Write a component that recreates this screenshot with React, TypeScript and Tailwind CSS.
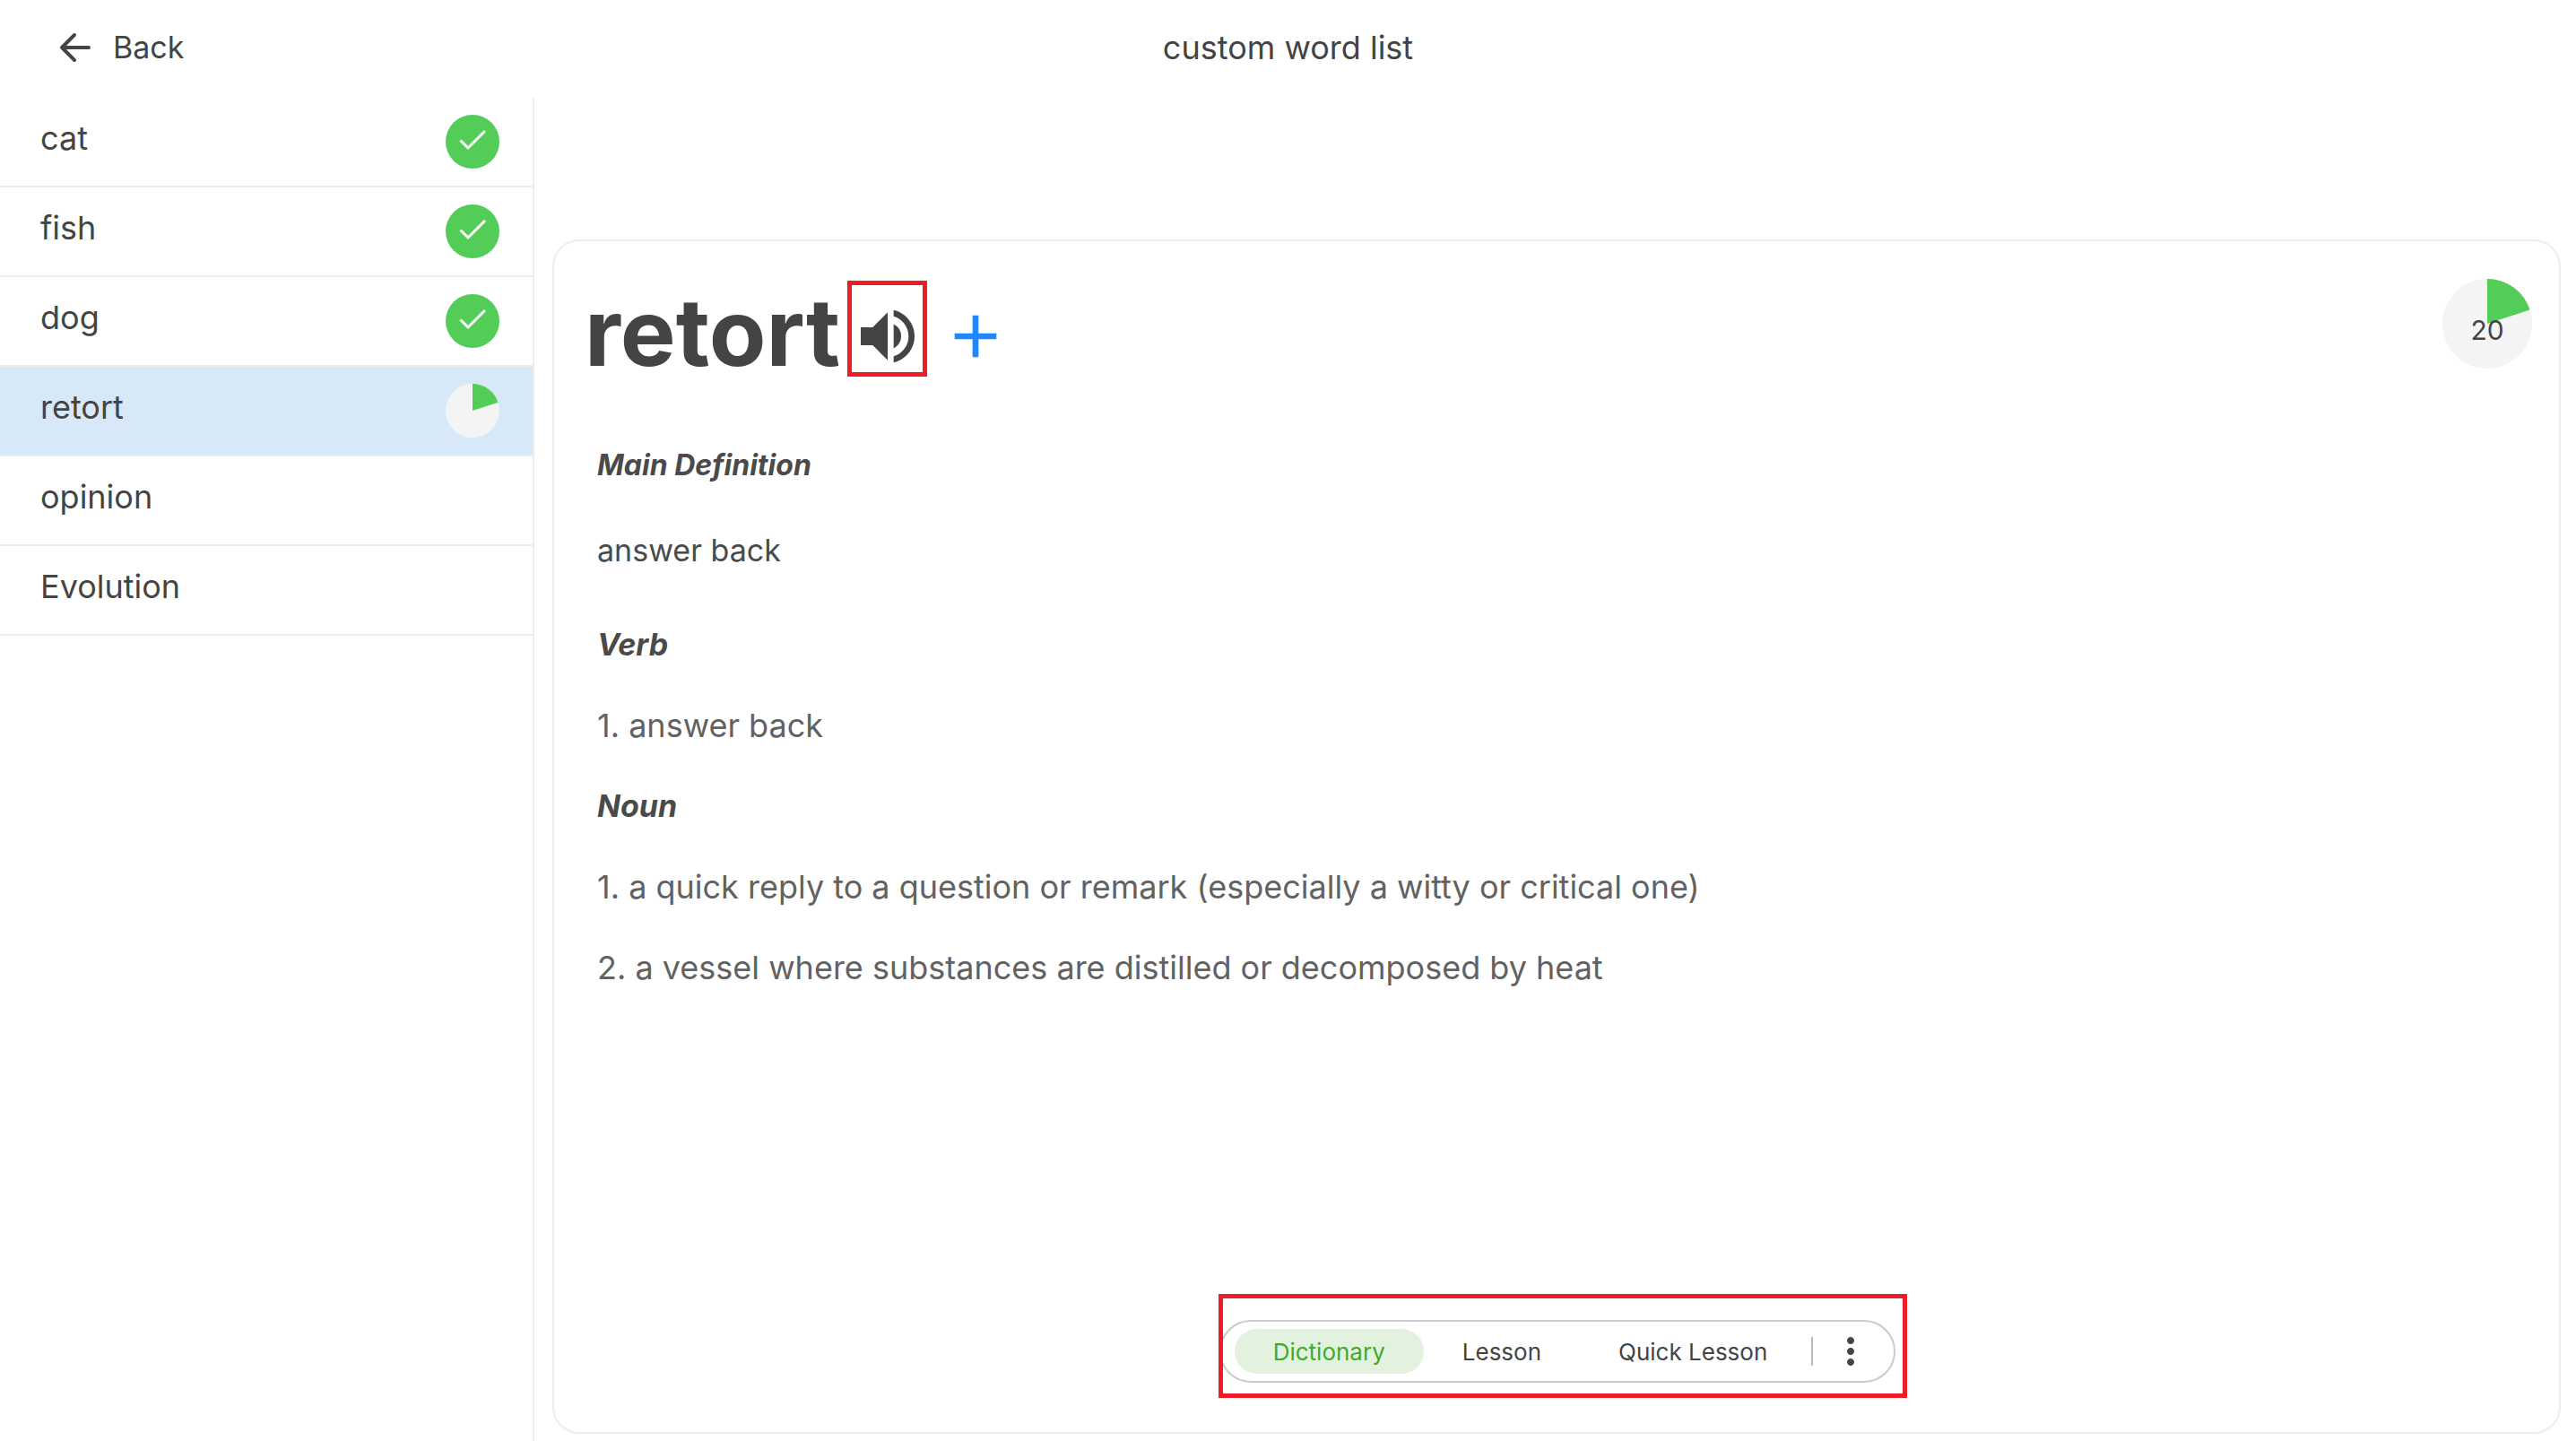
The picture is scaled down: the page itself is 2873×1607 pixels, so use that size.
import { useState } from "react";
import { clsx } from "clsx";
import { MdAdd, MdMoreVert, MdVolumeUp } from "react-icons/md";

type Word = {
  text: string;
  progress: number;
};

type Section = {
  title: string;
  senses: string[];
};

const WORDS: Word[] = [
  { text: "cat", progress: 100 },
  { text: "fish", progress: 100 },
  { text: "dog", progress: 100 },
  { text: "retort", progress: 20 },
  { text: "opinion", progress: 0 },
  { text: "Evolution", progress: 0 },
];

const SECTIONS: Section[] = [
  { title: "Verb", senses: ["answer back"] },
  {
    title: "Noun",
    senses: [
      "a quick reply to a question or remark (especially a witty or critical one)",
      "a vessel where substances are distilled or decomposed by heat",
    ],
  },
];

const TABS = ["Dictionary", "Lesson", "Quick Lesson"];

function ProgressPie({ value, className }: { value: number; className?: string }) {
  const angle = (value / 100) * Math.PI * 2;
  const x = 50 + 50 * Math.sin(angle);
  const y = 50 - 50 * Math.cos(angle);

  return (
    <svg viewBox="0 0 100 100" className={className} aria-hidden="true">
      <circle cx="50" cy="50" r="50" fill="#f4f4f4" />
      <path
        d={`M50 50V0A50 50 0 ${value > 50 ? 1 : 0} 1 ${x} ${y}Z`}
        fill="#53cc58"
      />
    </svg>
  );
}

function DoneBadge() {
  return (
    <svg viewBox="0 0 60 60" className="size-[60px]" aria-hidden="true">
      <circle cx="30" cy="30" r="30" fill="#53cc58" />
      <path d="M16.5 28.5L25 37L44 18" fill="none" stroke="#fff" strokeWidth="3" />
    </svg>
  );
}

function WordStatus({ progress }: { progress: number }) {
  if (progress === 0) return null;
  if (progress === 100) return <DoneBadge />;
  return <ProgressPie value={progress} className="size-[60px]" />;
}

function Header() {
  return (
    <header className="grid h-[109px] grid-cols-[1fr_auto_1fr] items-center pb-1">
      <button
        type="button"
        className="flex items-center gap-6 justify-self-start pl-[66px] text-[34px] leading-[50px]"
      >
        <svg viewBox="0 0 36 34" className="h-[34px] w-9" fill="none" aria-hidden="true">
          <path
            d="M17 3L3 17L17 31M3 17H33"
            stroke="#444"
            strokeWidth="4"
            strokeLinecap="round"
            strokeLinejoin="round"
          />
        </svg>
        Back
      </button>
      <h1 className="text-[36px] leading-[50px]">custom word list</h1>
    </header>
  );
}

function Sidebar({ selected, onSelect }: { selected: string; onSelect: (word: string) => void }) {
  return (
    <aside className="w-[596px] shrink-0 border-r-2 border-[#ededed]">
      <ul>
        {WORDS.map((word) => (
          <li key={word.text} className="border-b-2 border-[#ededed]">
            <button
              type="button"
              onClick={() => onSelect(word.text)}
              className={clsx(
                "flex h-[98px] w-full items-center justify-between pr-[37px] pl-[45px]",
                word.text === selected && "bg-[#d7e8f8]",
              )}
            >
              <span className="pb-2 text-[36px] leading-[50px]">{word.text}</span>
              <WordStatus progress={word.progress} />
            </button>
          </li>
        ))}
      </ul>
    </aside>
  );
}

function ModeTabs() {
  const [active, setActive] = useState("Dictionary");

  return (
    <div className="relative mx-auto mt-auto flex items-center rounded-full border-2 border-[#cacaca] py-2 pr-6 pl-[15px]">
      {TABS.map((tab) => (
        <button
          key={tab}
          type="button"
          onClick={() => setActive(tab)}
          className={clsx(
            "rounded-full px-[43px] pt-0.5 text-[26px] leading-[48px]",
            tab === active && "bg-[#e3f2df] text-[#43a926]",
          )}
        >
          {tab}
        </button>
      ))}
      <span className="mr-[18px] ml-1.5 h-8 w-0.5 bg-[#bbb]" />
      <button type="button" aria-label="More options">
        <MdMoreVert className="size-12" />
      </button>
      {/* Highlight frame */}
      <div className="pointer-events-none absolute -top-[31px] -right-[15px] -bottom-[19px] -left-[3px] border-5 border-[#ee1c25]" />
    </div>
  );
}

function WordCard({ word }: { word: string }) {
  return (
    <section className="flex flex-1 flex-col rounded-[30px] border-2 border-[#ededed] pt-[42px] pr-[30px] pb-[55px] pl-8">
      <div className="flex items-start justify-between">
        <div className="flex items-center pt-0.5">
          <h2 className="pt-2 pl-0.5 text-[104px] leading-[99px] font-bold">{word}</h2>
          <button
            type="button"
            aria-label="Play pronunciation"
            className="ml-2 flex h-[107px] w-[89px] items-center justify-center border-5 border-[#ee1c25] pt-4"
          >
            <MdVolumeUp className="size-20 shrink-0" />
          </button>
          <button type="button" aria-label="Add word" className="ml-3.5 pt-4 text-[#1f87ff]">
            <MdAdd className="size-20" />
          </button>
        </div>
        <div className="grid place-items-center">
          <ProgressPie value={20} className="col-start-1 row-start-1 size-[100px]" />
          <span className="col-start-1 row-start-1 pt-3.5 text-[30px] leading-[50px]">20</span>
        </div>
      </div>

      <div className="mt-[74px] pl-4 text-[34px] leading-[50px] text-[#4a4a4a]">
        <h3 className="text-[32px] font-bold italic">Main Definition</h3>
        <p className="mt-[45px] mb-[55px]">answer back</p>
        <div className="flex flex-col gap-10">
          {SECTIONS.map((section) => (
            <div key={section.title} className="flex flex-col gap-10">
              <h3 className="font-bold italic">{section.title}</h3>
              {section.senses.map((sense, i) => (
                <p key={sense} className="text-[36px] text-[#626262]">
                  {i + 1}. {sense}
                </p>
              ))}
            </div>
          ))}
        </div>
      </div>

      <ModeTabs />
    </section>
  );
}

export default function App() {
  const [selected, setSelected] = useState("retort");

  return (
    <div className="flex min-h-screen flex-col bg-white font-['Inter',sans-serif] text-[#444]">
      <Header />
      <div className="flex flex-1">
        <Sidebar selected={selected} onSelect={setSelected} />
        <main className="flex flex-1 flex-col pt-[158px] pr-[17px] pb-2 pl-5">
          <WordCard word={selected} />
        </main>
      </div>
    </div>
  );
}
